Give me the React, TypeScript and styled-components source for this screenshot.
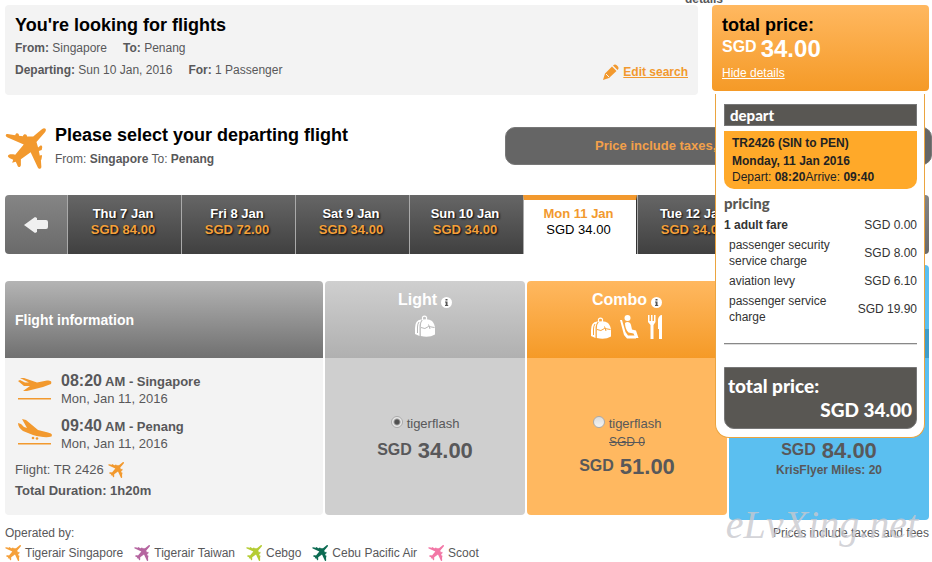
import React from "react";
import styled, { createGlobalStyle, css } from "styled-components";

const GlobalStyle = createGlobalStyle`
  * { box-sizing: border-box; }
  html { background: #fff; }
  body {
    margin: 0;
    font-family: "Liberation Sans", Arial, sans-serif;
    font-size: 12px;
    line-height: 16px;
    color: #58585a;
    overflow-x: hidden;
  }
  h1, h2, h3, p, dl, dd { margin: 0; }
`;

const orange = "#f2992e";

const Page = styled.main`
  padding: 0 3px 0 5px;
`;

const Overflowing = styled.div`
  height: 5px;
  display: flex;
  align-items: flex-end;
  justify-content: flex-end;
  overflow: hidden;
  padding-right: 206px;
  font-weight: bold;
  line-height: 12px;
`;

const TopRow = styled.header`
  display: flex;
  align-items: flex-start;
  gap: 14px;
`;

const SearchBox = styled.section`
  flex: 1;
  display: flex;
  justify-content: space-between;
  align-items: flex-end;
  height: 90px;
  padding: 10px 10px 15px;
  border-radius: 4px;
  background: #f3f3f3;
`;

const Heading = styled.h2`
  font-size: 18px;
  line-height: 20px;
  color: #000;
`;

const Summary = styled.div`
  align-self: flex-start;
`;

const Facts = styled.p`
  display: flex;
  gap: 16px;
  padding-top: 5px;
  line-height: 17px;
`;

const EditLink = styled.a`
  display: flex;
  align-items: center;
  gap: 4px;
  color: ${orange};
  font-weight: bold;
`;

const TotalWrap = styled.aside`
  position: relative;
  width: 217px;
`;

const TotalCard = styled.section`
  height: 86px;
  padding: 10px;
  border-radius: 4px;
  color: #fff;
  background: linear-gradient(#ffb860, #f59a27);
`;

const TotalAmount = styled.p`
  display: flex;
  gap: 4px;
  font-size: 24px;
  font-weight: bold;
  line-height: 28px;
`;

const Currency = styled.span`
  font-size: 16px;
  line-height: 24px;
`;

const DetailsLink = styled.a`
  display: block;
  padding-top: 2px;
  color: #fff;
`;

const Popover = styled.div`
  position: absolute;
  z-index: 3;
  top: 89px;
  left: 3px;
  right: 4px;
  padding: 10px 7px 8px 8px;
  border: 1px solid #eba43f;
  border-top: 0;
  border-radius: 0 0 14px 14px;
  background: #fff;
  color: #333;
`;

const BarTitle = styled.h3`
  padding: 0 5px;
  border: 1px solid #777;
  background: #595753;
  color: #fff;
  font: 900 15px/20px Lato, sans-serif;
`;

const Leg = styled.div`
  margin-top: 5px;
  padding: 3px 8px 5px;
  border-radius: 0 0 10px 10px;
  background: #ffa929;
  color: #222;
`;

const LegLine = styled.p<{ $strong?: boolean }>`
  line-height: ${(p) => (p.$strong ? 18 : 14)}px;
  font-weight: ${(p) => (p.$strong ? "bold" : "normal")};
`;

const PricingTitle = styled.h3`
  color: #595753;
  font: 900 15px/20px Lato, sans-serif;
  padding: 4px 0 2px;
`;

const Charges = styled.table`
  width: 100%;
  border-collapse: collapse;
  th {
    text-align: left;
    padding: 2px 0 2px 5px;
    font-weight: normal;
    width: 125px;
  }
  tr:first-child th {
    padding-left: 0;
    font-weight: bold;
  }
  td {
    text-align: right;
    padding: 2px 0;
  }
`;

const Rule = styled.hr`
  margin: 16px 0 22px;
  border: 0;
  height: 2px;
  background: linear-gradient(#888 50%, #ddd 50%);
`;

const GrandTotal = styled.div`
  padding: 6px 4px 6px 3px;
  border: 1px solid #777;
  border-radius: 0 0 10px 10px;
  background: #595753;
  color: #fff;
  font: 900 19px/24px Lato, sans-serif;
  p + p { text-align: right; }
`;

const SelectRow = styled.section`
  display: flex;
  justify-content: space-between;
  padding-top: 30px;
  margin-right: -3px;
`;

const SelectTitle = styled.div`
  display: flex;
  gap: 9px;
`;

const TitlePlane = styled.span`
  padding-top: 3px;
  line-height: 0;
`;

const RouteLine = styled.p`
  padding-top: 6px;
`;

const Notice = styled.p`
  width: 427px;
  height: 38px;
  margin-top: 2px;
  padding-left: 89px;
  border: 1px solid #777;
  border-radius: 10px;
  background: #656565;
  color: #f2a04a;
  font-size: 13px;
  font-weight: bold;
  line-height: 36px;
`;

const DateBar = styled.nav`
  display: grid;
  grid-template-columns: 62px repeat(7, 1fr) 64px;
  height: 59px;
  margin-top: 26px;
  border-radius: 4px;
  overflow: hidden;
`;

const Step = styled.button`
  display: flex;
  align-items: center;
  justify-content: center;
  padding: 0;
  border: 0;
  background: linear-gradient(#858585, #6a6a6a);
  color: #f0f0f0;
`;

const DateTab = styled.button<{ $active?: boolean }>`
  padding: 0 3px 5px 0;
  border: 0;
  border-left: 1px solid #aaa;
  background: linear-gradient(#666, #404040);
  color: #fff;
  font: bold 13px/16px "Liberation Sans", Arial, sans-serif;
  text-shadow: 1px 1px 2px #000;
  span { display: block; }
  span + span { color: #f4a03a; }
  ${(p) =>
    p.$active &&
    css`
      padding-bottom: 10px;
      border-top: 5px solid ${orange};
      border-right: 1px solid #333;
      background: #fff;
      color: ${orange};
      text-shadow: none;
      span + span { color: #000; font-weight: normal; }
    `}
`;

const FareTable = styled.table`
  width: calc(100% + 4px);
  margin: 27px -2px 0;
  border-spacing: 2px 0;
  table-layout: fixed;
`;

const FareCol = styled.col`
  width: 200px;
`;

type Tone = "info" | "light" | "combo" | "business";

const headFill: Record<Tone, string> = {
  info: "linear-gradient(#b4b4b4, #707070)",
  light: "linear-gradient(#cfcfcf, #b0b0b0)",
  combo: "linear-gradient(#ffb860, #f59a27)",
  business: "linear-gradient(#5bbff0, #5bbff0 69%, #3f9dc9 69%, #3f9dc9)",
};
const bodyFill: Record<Tone, string> = {
  info: "#f3f3f3",
  light: "#cfcfcf",
  combo: "#ffb860",
  business: "#5bbff0",
};

const bodyPadding: Record<Tone, string> = {
  info: "14px 10px 0",
  light: "56px 10px 0",
  combo: "56px 10px 0",
  business: "76px 10px 0",
};

const HeadCell = styled.th<{ $tone: Tone }>`
  position: relative;
  height: 77px;
  padding: ${(p) => (p.$tone === "info" ? "0 10px" : "9px 10px 0")};
  vertical-align: ${(p) => (p.$tone === "info" ? "middle" : "top")};
  text-align: ${(p) => (p.$tone === "info" ? "left" : "center")};
  border-radius: 4px 4px 0 0;
  background: ${(p) => headFill[p.$tone]};
  color: #fff;
  font-size: ${(p) => (p.$tone === "info" ? 14 : 16)}px;
  line-height: 20px;
  ${(p) =>
    p.$tone === "business" &&
    css`
      &::before {
        content: "";
        position: absolute;
        inset: -16px 0 0;
        border-radius: 4px 4px 0 0;
        background: ${headFill.business};
      }
    `}
`;

const BodyCell = styled.td<{ $tone: Tone }>`
  position: relative;
  height: 157px;
  padding: ${(p) => bodyPadding[p.$tone]};
  vertical-align: top;
  text-align: ${(p) => (p.$tone === "info" ? "left" : "center")};
  border-radius: 0 0 4px 4px;
  background: ${(p) => bodyFill[p.$tone]};
  ${(p) =>
    p.$tone === "business" &&
    css`
      &::after {
        content: "";
        position: absolute;
        inset: auto 0 -5px;
        height: 9px;
        border-radius: 0 0 4px 4px;
        background: ${bodyFill.business};
      }
    `}
`;

const FareName = styled.div`
  display: flex;
  align-items: center;
  justify-content: center;
  gap: 4px;
  svg { margin-top: 4px; }
`;

const Perks = styled.div`
  display: flex;
  align-items: flex-end;
  justify-content: center;
  gap: 9px;
  padding-top: 5px;
`;

const Stop = styled.div`
  display: flex;
  gap: 8px;
  height: 45px;
  padding-left: 2px;
`;

const StopText = styled.p`
  font-size: 13px;
  line-height: 16px;
  strong { display: block; line-height: 18px; }
  b { font-size: 16px; }
`;

const StopMark = styled.span`
  padding-top: 2px;
  line-height: 0;
`;

const FlightLine = styled.p`
  display: flex;
  align-items: center;
  gap: 4px;
  height: 20px;
  margin-top: -2px;
  font-size: 13px;
`;

const Duration = styled.p`
  font-size: 13px;
  font-weight: bold;
  line-height: 22px;
`;

const Option = styled.label`
  display: flex;
  align-items: center;
  justify-content: center;
  gap: 4px;
  font-size: 13px;
  line-height: 20px;
`;

const Radio = styled.input`
  appearance: none;
  width: 12px;
  height: 12px;
  margin: 0 0 4px;
  border: 1px solid #aaa;
  border-radius: 50%;
  background: linear-gradient(#ddd, #f4f4f4);
  &:checked {
    background: radial-gradient(circle, #505050 0 2px, #e8e8e8 4px);
  }
`;

const OldPrice = styled.s`
  display: block;
  line-height: 16px;
`;

const FarePrice = styled.p`
  display: flex;
  justify-content: center;
  gap: 6px;
  padding-top: 4px;
  font-size: 22px;
  line-height: 26px;
  font-weight: bold;
`;

const Miles = styled.p`
  font-weight: bold;
  line-height: 12px;
`;

const Footer = styled.footer`
  position: relative;
  padding-top: 9px;
`;

const FooterTop = styled.div`
  display: flex;
  justify-content: space-between;
  line-height: 18px;
`;

const Watermark = styled.span`
  position: absolute;
  z-index: 2;
  top: -12px;
  right: 11px;
  color: rgba(200, 200, 206, 0.8);
  font: italic 40px/44px "Liberation Serif", serif;
`;

const Carriers = styled.ul`
  display: flex;
  gap: 11px;
  margin: 0;
  padding: 3px 0 0;
  list-style: none;
`;

const Carrier = styled.li`
  display: flex;
  align-items: center;
  gap: 4px;
`;

const Plane = ({ size, color = orange }: { size: number; color?: string }) => (
  <svg width={size} height={size} viewBox="0 0 40 40" fill={color} aria-hidden="true">
    <path d="M39.500 .8C40.300 1.800 39.800 3.200 38.800 4.500L30.700 13.700L32.300 19L34 17.500C35.500 16.500 36.500 17.500 36.300 19L35.800 21.500L33 22.500L34 27C35.500 25.500 36.300 26.500 36 28L35.500 31L35 31L35.500 38C35.300 40 33 40.500 32 38.500L25 23.700L15.500 30.500L15.500 36C15 39 12.500 38.500 12 36L10.500 33L7 34L8 31C6 30 3 29 2.800 27.500C3 25.500 6 25.500 10 26L18.300 16L2 9C0 8 .5 5.500 2.500 5.800L10 7C10.500 4.500 13.500 4.500 13.700 7.500L17.500 8C18 5.500 21.500 5.500 21.500 8.300L27.500 8.300L36 1.200C37.500 0 38.800 0 39.500 .8Z" />
  </svg>
);

const StopIcon = ({ landing }: { landing?: boolean }) => (
  <svg width="36" height="28" viewBox="0 0 36 28" fill={orange} aria-hidden="true">
    {landing ? (
      <>
        <path d="M5 0L9 1L21 11L31 13.500C35 14.500 35.500 15.500 34.500 17.500C30 19 23 18 16 16L6 12C3 10 1 7 1 4L4 5L7 8L10 9Z" />
        <circle cx="16" cy="19" r="1.300" />
        <circle cx="20" cy="19.500" r="1.300" />
      </>
    ) : (
      <path d="M3 4L7 4L20 8.500L30 6.500C34 6.500 35 7.500 34 10L26 13L10 17L6 17L13 12L7 12L1 7L3 6L8 8.500L12 8.500Z" />
    )}
    <path d="M1 24H34V25.500H1Z" />
  </svg>
);

const Backpack = ({ line }: { line: string }) => (
  <svg width="20" height="22" viewBox="0 0 20 22" fill="#fff" aria-hidden="true">
    <path d="M6 4.500Q0 5 0 13V19L4.500 21V12Q4.500 7 7 4.500Z" />
    <path d="M7.500 5V2.200Q9.500 .2 11.500 2.200V5" fill="none" stroke="#fff" strokeWidth="1.200" />
    <path d="M8 4.500Q14 3.500 17 6Q20 9 20 14V19.500Q14 23 5.800 21V12Q5.800 7 8 4.500Z" />
    <path d="M2.500 18V12Q2.500 9 4 7M6 12.500Q10 15 13.500 11.500L19.500 12.500M13.500 9.500L15 14" fill="none" stroke={line} strokeWidth="1" />
  </svg>
);

const Seat = () => (
  <svg width="19" height="24" viewBox="0 0 19 24" fill="#fff" aria-hidden="true">
    <circle cx="7.500" cy="3" r="3" />
    <path d="M0 5H2L5.500 17L8 20.500H16V23.500H7L4 20Z" />
    <path d="M5 8C7 6 10.500 7 11 10L12 14.500L16 15.500L18.500 23H15.500L13.500 18.500L8.500 17.500C6 15 5 11 5 8Z" />
  </svg>
);

const Cutlery = () => (
  <svg width="15" height="24" viewBox="0 0 15 24" fill="#fff" aria-hidden="true">
    <path d="M0 0H1.500V6H3V0H4.500V6H6V0H7.500V7L5.500 10V24H2.500V10L0 7ZM14 0V24H11V14H10V5C10 2 12 0 14 0Z" />
  </svg>
);

const Info = () => (
  <svg width="11" height="11" viewBox="0 0 11 11" aria-hidden="true">
    <circle cx="5.500" cy="5.500" r="5.500" fill="#fff" />
    <path d="M4.500 2H6.500V3.500H4.500ZM4 4.500H6.500V8H7.200V9H4V8H4.700V5.500H4Z" fill="#555" />
  </svg>
);

const Pencil = () => (
  <svg width="16" height="16" viewBox="0 0 16 16" fill={orange} aria-hidden="true">
    <path d="M9 2.500L13.500 7L6 14L0 16L2 9.500ZM10 1.500C11.500 0 12.500 0 14 1.500C16 3.500 16 4.500 14.500 6Z" />
    <path d="M3 10L6 13" stroke="#f3f3f3" />
  </svg>
);

const LeftArrow = () => (
  <svg width="24" height="18" viewBox="0 0 24 18" fill="currentColor" aria-hidden="true">
    <path d="M11 1L13 2V4H22Q24 4 24 6V11Q24 13 22 13H13V16L11 17L0 9Z" />
  </svg>
);

const dates = [
  ["Thu 7 Jan", "SGD 84.00"],
  ["Fri 8 Jan", "SGD 72.00"],
  ["Sat 9 Jan", "SGD 34.00"],
  ["Sun 10 Jan", "SGD 34.00"],
  ["Mon 11 Jan", "SGD 34.00"],
  ["Tue 12 Jan", "SGD 34.00"],
];

const charges = [
  ["1 adult fare", "SGD 0.00"],
  ["passenger security service charge", "SGD 8.00"],
  ["aviation levy", "SGD 6.10"],
  ["passenger service charge", "SGD 19.90"],
];

const carriers = [
  ["Tigerair Singapore", "#f5a03a"],
  ["Tigerair Taiwan", "#b565a0"],
  ["Cebgo", "#b5cc34"],
  ["Cebu Pacific Air", "#0c6b52"],
  ["Scoot", "#f277a6"],
];

export default function App() {
  return (
    <>
      <GlobalStyle />
      <Page>
        <Overflowing>details</Overflowing>
        <TopRow>
          <SearchBox>
            <Summary>
              <Heading>You're looking for flights</Heading>
              <Facts>
                <span><b>From:</b> Singapore</span>
                <span><b>To:</b> Penang</span>
              </Facts>
              <Facts>
                <span><b>Departing:</b> Sun 10 Jan, 2016</span>
                <span><b>For:</b> 1 Passenger</span>
              </Facts>
            </Summary>
            <EditLink href="#search"><Pencil />Edit search</EditLink>
          </SearchBox>
          <TotalWrap>
            <TotalCard>
              <Heading>total price:</Heading>
              <TotalAmount><Currency>SGD</Currency>34.00</TotalAmount>
              <DetailsLink href="#details">Hide details</DetailsLink>
            </TotalCard>
            <Popover id="details">
              <BarTitle>depart</BarTitle>
              <Leg>
                <LegLine $strong>TR2426 (SIN to PEN)</LegLine>
                <LegLine $strong>Monday, 11 Jan 2016</LegLine>
                <LegLine>Depart: <b>08:20</b>Arrive: <b>09:40</b></LegLine>
              </Leg>
              <PricingTitle>pricing</PricingTitle>
              <Charges>
                <tbody>
                  {charges.map(([name, value]) => (
                    <tr key={name}><th scope="row">{name}</th><td>{value}</td></tr>
                  ))}
                </tbody>
              </Charges>
              <Rule />
              <GrandTotal><p>total price:</p><p>SGD 34.00</p></GrandTotal>
            </Popover>
          </TotalWrap>
        </TopRow>

        <SelectRow>
          <SelectTitle>
            <TitlePlane><Plane size={41} /></TitlePlane>
            <div>
              <Heading>Please select your departing flight</Heading>
              <RouteLine>From: <b>Singapore</b> To: <b>Penang</b></RouteLine>
            </div>
          </SelectTitle>
          <Notice>Price include taxes,</Notice>
        </SelectRow>

        <DateBar aria-label="Departure dates">
          <Step aria-label="Earlier dates"><LeftArrow /></Step>
          {dates.map(([day, price]) => (
            <DateTab key={day} $active={day === "Mon 11 Jan"}>
              <span>{day}</span><span>{price}</span>
            </DateTab>
          ))}
          <DateTab aria-label="Next date" />
          <Step aria-label="Later dates" />
        </DateBar>

        <FareTable>
          <colgroup><col /><FareCol /><FareCol /><FareCol /></colgroup>
          <thead>
            <tr>
              <HeadCell $tone="info">Flight information</HeadCell>
              <HeadCell $tone="light">
                <FareName>Light<Info /></FareName>
                <Perks><Backpack line="#b8b8b8" /></Perks>
              </HeadCell>
              <HeadCell $tone="combo">
                <FareName>Combo<Info /></FareName>
                <Perks><Backpack line="#f8a53c" /><Seat /><Cutlery /></Perks>
              </HeadCell>
              <HeadCell $tone="business" />
            </tr>
          </thead>
          <tbody>
            <tr>
              <BodyCell $tone="info">
                <Stop>
                  <StopMark><StopIcon /></StopMark>
                  <StopText><strong><b>08:20</b> AM - Singapore</strong>Mon, Jan 11, 2016</StopText>
                </Stop>
                <Stop>
                  <StopMark><StopIcon landing /></StopMark>
                  <StopText><strong><b>09:40</b> AM - Penang</strong>Mon, Jan 11, 2016</StopText>
                </Stop>
                <FlightLine>Flight: TR 2426 <Plane size={16} /></FlightLine>
                <Duration>Total Duration: 1h20m</Duration>
              </BodyCell>
              <BodyCell $tone="light">
                <Option><Radio type="radio" name="fare" defaultChecked />tigerflash</Option>
                <FarePrice><Currency>SGD</Currency>34.00</FarePrice>
              </BodyCell>
              <BodyCell $tone="combo">
                <Option><Radio type="radio" name="fare" />tigerflash</Option>
                <OldPrice>SGD 0</OldPrice>
                <FarePrice><Currency>SGD</Currency>51.00</FarePrice>
              </BodyCell>
              <BodyCell $tone="business">
                <FarePrice><Currency>SGD</Currency>84.00</FarePrice>
                <Miles>KrisFlyer Miles: 20</Miles>
              </BodyCell>
            </tr>
          </tbody>
        </FareTable>

        <Footer>
          <FooterTop><span>Operated by:</span><span>Prices include taxes and fees</span></FooterTop>
          <Watermark>eLvXing.net</Watermark>
          <Carriers>
            {carriers.map(([name, color]) => (
              <Carrier key={name}><Plane size={16} color={color} />{name}</Carrier>
            ))}
          </Carriers>
        </Footer>
      </Page>
    </>
  );
}
